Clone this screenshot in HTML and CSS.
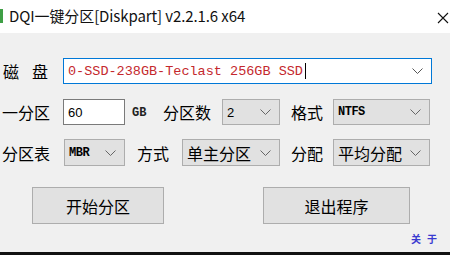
FILE: index.html
```html
<!DOCTYPE html>
<html>
<head>
<meta charset="utf-8">
<link rel="stylesheet" href="styles.css">
</head>
<body>
<div class="window">
  <div class="titlebar">
    <span class="appicon"></span>
    <span class="title">DQI一键分区[Diskpart] v2.2.1.6 x64</span>
    <span class="close">
      <svg width="12" height="12" viewBox="0 0 12 12"><path d="M1 1 L11 11 M11 1 L1 11" stroke="#111" stroke-width="1.1" fill="none"/></svg>
    </span>
  </div>
  <div class="content">
    <div class="row row1">
      <div class="lbl lbl-disk">磁<span class="sp"></span>盘</div>
      <div class="combo">
        <span class="combo-text">0-SSD-238GB-Teclast 256GB SSD</span><span class="caret"></span>
        <svg class="chev" width="11" height="7" viewBox="0 0 11 7"><path d="M0.5 0.5 L5.5 5.5 L10.5 0.5" stroke="#555" stroke-width="1" fill="none"/></svg>
      </div>
    </div>
    <div class="row row2">
      <div class="lbl w63">一分区</div>
      <div class="input">60</div>
      <div class="unit">GB</div>
      <div class="lbl w59">分区数</div>
      <div class="select w58"><span class="val">2</span>
        <svg class="chev" width="11" height="7" viewBox="0 0 11 7"><path d="M0.5 0.5 L5.5 5.5 L10.5 0.5" stroke="#666" stroke-width="1" fill="none"/></svg></div>
      <div class="lbl w53">格式</div>
      <div class="select w97"><span class="val mono">NTFS</span>
        <svg class="chev" width="11" height="7" viewBox="0 0 11 7"><path d="M0.5 0.5 L5.5 5.5 L10.5 0.5" stroke="#666" stroke-width="1" fill="none"/></svg></div>
    </div>
    <div class="row row3">
      <div class="lbl w64">分区表</div>
      <div class="select w61"><span class="val mono">MBR</span>
        <svg class="chev" width="11" height="7" viewBox="0 0 11 7"><path d="M0.5 0.5 L5.5 5.5 L10.5 0.5" stroke="#666" stroke-width="1" fill="none"/></svg></div>
      <div class="lbl w57">方式</div>
      <div class="select w98"><span class="val cjk">单主分区</span>
        <svg class="chev" width="11" height="7" viewBox="0 0 11 7"><path d="M0.5 0.5 L5.5 5.5 L10.5 0.5" stroke="#666" stroke-width="1" fill="none"/></svg></div>
      <div class="lbl w53">分配</div>
      <div class="select w97"><span class="val cjk">平均分配</span>
        <svg class="chev" width="11" height="7" viewBox="0 0 11 7"><path d="M0.5 0.5 L5.5 5.5 L10.5 0.5" stroke="#666" stroke-width="1" fill="none"/></svg></div>
    </div>
    <div class="row buttons">
      <div class="btn btn-start">开始分区</div>
      <div class="btn btn-exit">退出程序</div>
    </div>
    <div class="about-row"><span class="about">关于</span></div>
  </div>
  <div class="taskbar"></div>
</div>
</body>
</html>
```
FILE: styles.css
```css
html, body {
  margin: 0;
  padding: 0;
}
body {
  width: 450px;
  height: 255px;
  overflow: hidden;
  background: #f0f0f0;
  font-family: "Noto Sans CJK SC", "Noto Sans", sans-serif;
  color: #000;
}
.window {
  display: flex;
  flex-direction: column;
  width: 450px;
  height: 255px;
}
.titlebar {
  height: 33px;
  background: #fff;
  display: flex;
  align-items: center;
  position: relative;
}
.appicon {
  width: 3px;
  height: 14px;
  background: #3f9f45;
  margin-top: -1px;
}
.title {
  margin-left: 6px;
  font-size: 15px;
  line-height: 20px;
  color: #111;
  letter-spacing: -0.1px;
  margin-top: -1px;
}
.close {
  position: absolute;
  left: 437px;
  top: 12px;
  display: flex;
}
.content {
  flex: 1;
  display: flex;
  flex-direction: column;
  padding-top: 25px;
}
.row {
  display: flex;
  align-items: center;
}
.row1 { height: 26px; }
.row2 { height: 26px; margin-top: 15px; }
.row3 { height: 27px; margin-top: 14px; }
.lbl {
  font-size: 16px;
  line-height: 20px;
  box-sizing: border-box;
  white-space: nowrap;
}
.lbl-disk {
  width: 63px;
  padding-left: 3px;
  display: flex;
}
.sp { width: 13px; }
.w63 { width: 63px; padding-left: 2px; }
.w64 { width: 64px; padding-left: 2px; }
.w59 { width: 59px; }
.w53 { width: 53px; padding-left: 11px; }
.w57 { width: 57px; padding-left: 12px; }
.combo {
  width: 369px;
  height: 26px;
  box-sizing: border-box;
  border: 1px solid #0078d7;
  background: #fff;
  display: flex;
  align-items: center;
  padding-left: 4px;
  position: relative;
}
.combo-text {
  font-family: "Liberation Mono", monospace;
  font-size: 13.5px;
  color: #c4282d;
  white-space: nowrap;
}
.caret {
  width: 1px;
  height: 16px;
  background: #000;
  margin-left: 2px;
}
.chev {
  position: absolute;
  right: 8px;
  top: 50%;
  margin-top: -3px;
}
.input {
  width: 62px;
  height: 26px;
  box-sizing: border-box;
  border: 1px solid #7a7a7a;
  background: #fff;
  display: flex;
  align-items: center;
  padding-left: 4px;
  font-family: "Liberation Sans", sans-serif;
  font-size: 13px;
}
.unit {
  width: 38px;
  box-sizing: border-box;
  padding-left: 7px;
  padding-top: 2px;
  font-family: "Liberation Mono", monospace;
  font-weight: bold;
  font-size: 12px;
  color: #222;
}
.select {
  height: 26px;
  box-sizing: border-box;
  border: 1px solid #adadad;
  background: #e1e1e1;
  display: flex;
  align-items: center;
  padding-left: 4px;
  position: relative;
}
.row3 .select { height: 27px; }
.w58 { width: 58px; }
.w61 { width: 61px; }
.w97 { width: 97px; }
.w98 { width: 98px; }
.val {
  font-family: "Liberation Sans", sans-serif;
  font-size: 13px;
}
.val.mono {
  font-family: "Liberation Mono", monospace;
  font-weight: bold;
  font-size: 12px;
  letter-spacing: -0.5px;
}
.val.cjk {
  font-family: "Noto Sans CJK SC", sans-serif;
  font-size: 16px;
}
.buttons {
  margin-top: 21px;
  height: 37px;
}
.btn {
  height: 37px;
  box-sizing: border-box;
  border: 1px solid #adadad;
  background: #e1e1e1;
  display: flex;
  align-items: center;
  justify-content: center;
  font-size: 16px;
}
.btn-start {
  width: 132px;
  margin-left: 32px;
}
.btn-exit {
  width: 147px;
  margin-left: 99px;
}
.about-row {
  display: flex;
  justify-content: flex-end;
  padding-right: 13px;
  margin-top: 9px;
}
.about {
  font-size: 10px;
  line-height: 12px;
  font-weight: bold;
  color: #3a3ad0;
  letter-spacing: 6px;
  margin-right: -6px;
}
.taskbar {
  height: 3px;
  background: #111;
  margin-top: auto;
}
```
